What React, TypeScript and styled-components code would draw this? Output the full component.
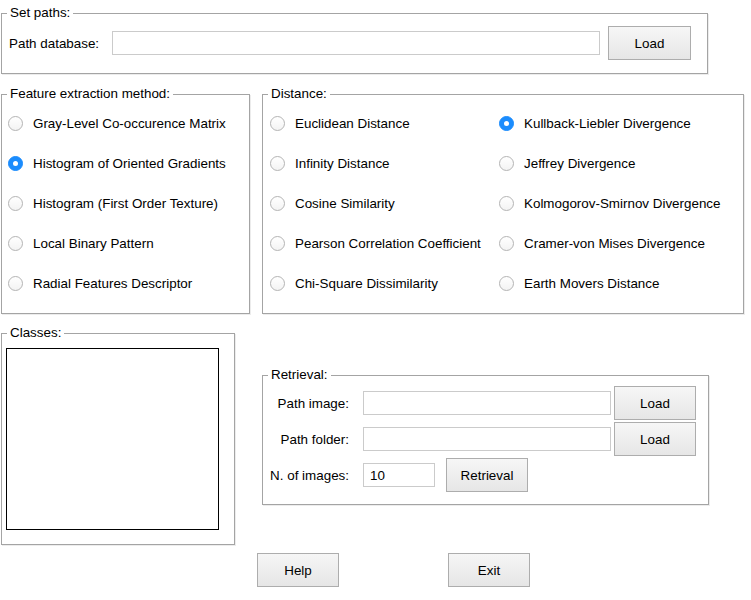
import React, { useState } from "react";
import styled, { createGlobalStyle } from "styled-components";

const GlobalStyle = createGlobalStyle`
  html, body {
    margin: 0;
    padding: 0;
    background: #ffffff;
  }
  body {
    font-family: "Liberation Sans", Arial, sans-serif;
    font-size: 13.4px;
    color: #000;
  }
  * {
    box-sizing: border-box;
  }
`;

const features = [
  "Gray-Level Co-occurence Matrix",
  "Histogram of Oriented Gradients",
  "Histogram (First Order Texture)",
  "Local Binary Pattern",
  "Radial Features Descriptor",
];

const distances = [
  "Euclidean Distance",
  "Kullback-Liebler Divergence",
  "Infinity Distance",
  "Jeffrey Divergence",
  "Cosine Similarity",
  "Kolmogorov-Smirnov Divergence",
  "Pearson Correlation Coefficient",
  "Cramer-von Mises Divergence",
  "Chi-Square Dissimilarity",
  "Earth Movers Distance",
];

const App = () => {
  const [feature, setFeature] = useState(1);
  const [distance, setDistance] = useState(1);

  return (
    <Page>
      <GlobalStyle />
      <SetPaths>
        <Legend>Set paths:</Legend>
        <PathRow>
          <Label>Path database:</Label>
          <TextBox $width={488} />
          <Button $width={83} $gap={8}>Load</Button>
        </PathRow>
      </SetPaths>

      <MiddleRow>
        <FeaturePanel>
          <Legend>Feature extraction method:</Legend>
          <RadioList>
            {features.map((f, i) => (
              <RadioRow key={f} onClick={() => setFeature(i)}>
                <Radio $checked={feature === i} />
                <span>{f}</span>
              </RadioRow>
            ))}
          </RadioList>
        </FeaturePanel>

        <DistancePanel>
          <Legend>Distance:</Legend>
          <DistanceGrid>
            {distances.map((d, i) => (
              <RadioRow key={d} onClick={() => setDistance(i)}>
                <Radio $checked={distance === i} />
                <span>{d}</span>
              </RadioRow>
            ))}
          </DistanceGrid>
        </DistancePanel>
      </MiddleRow>

      <LowerRow>
        <ClassesPanel>
          <Legend>Classes:</Legend>
          <ListBox />
        </ClassesPanel>

        <RetrievalPanel>
          <Legend>Retrieval:</Legend>
          <FormRows>
            <FormRow>
              <FieldLabel>Path image:</FieldLabel>
              <TextBox $width={248} />
              <Button $width={82}>Load</Button>
            </FormRow>
            <FormRow>
              <FieldLabel>Path folder:</FieldLabel>
              <TextBox $width={248} />
              <Button $width={82}>Load</Button>
            </FormRow>
            <FormRow>
              <FieldLabel>N. of images:</FieldLabel>
              <TextBox $width={72} defaultValue="10" />
              <Button $width={82} $gap={8}>Retrieval</Button>
            </FormRow>
          </FormRows>
        </RetrievalPanel>
      </LowerRow>

      <BottomBar>
        <Button $width={82}>Help</Button>
        <Button $width={82}>Exit</Button>
      </BottomBar>
    </Page>
  );
};

const Page = styled.div`
  width: 751px;
  height: 600px;
  padding: 5px 0 0 1px;
`;

const Panel = styled.fieldset`
  margin: 0;
  padding: 0;
  min-width: 0;
  border: 1px solid #a4a4a4;
  box-shadow: 1px 1px 0 #ececec;
`;

const Legend = styled.legend`
  margin-left: 5px;
  padding: 0 3px;
  height: 16px;
  line-height: 15px;
  font-size: 13.4px;
`;

const SetPaths = styled(Panel)`
  width: 707px;
  height: 69px;
`;

const PathRow = styled.div`
  display: flex;
  align-items: center;
  padding: 5px 0 0 7px;
`;

const Label = styled.span`
  width: 103px;
`;

const TextBox = styled.input.attrs({ type: "text" })<{ $width: number }>`
  width: ${({ $width }) => $width}px;
  height: 24px;
  margin: 0;
  padding: 1px 6px 0;
  border: 1px solid #cbcbcb;
  background: #fff;
  font-family: "Liberation Sans", Arial, sans-serif;
  font-size: 13.4px;
  color: #000;
  outline: none;
`;

const Button = styled.button<{ $width: number; $gap?: number }>`
  width: ${({ $width }) => $width}px;
  height: 34px;
  margin: 0 0 0 ${({ $gap }) => $gap ?? 0}px;
  padding: 0;
  border: 1px solid #adadad;
  background: linear-gradient(#f6f6f6, #e6e6e6);
  font-family: "Liberation Sans", Arial, sans-serif;
  font-size: 13.4px;
  color: #000;
  cursor: pointer;
`;

const MiddleRow = styled.div`
  display: flex;
  gap: 12px;
  margin-top: 12px;
`;

const FeaturePanel = styled(Panel)`
  width: 249px;
  height: 228px;
`;

const DistancePanel = styled(Panel)`
  width: 482px;
  height: 228px;
`;

const RadioList = styled.div`
  display: flex;
  flex-direction: column;
  padding: 1px 0 0 6px;
`;

const DistanceGrid = styled.div`
  display: grid;
  grid-template-columns: 229px auto;
  padding: 1px 0 0 7px;
`;

const RadioRow = styled.label`
  display: flex;
  align-items: center;
  gap: 10px;
  height: 40px;
  white-space: nowrap;
  cursor: default;
`;

const Radio = styled.span<{ $checked: boolean }>`
  position: relative;
  flex: none;
  width: 15px;
  height: 15px;
  border-radius: 50%;
  border: 1px solid ${({ $checked }) => ($checked ? "#1b8cfd" : "#b4b4b4")};
  background: ${({ $checked }) =>
    $checked ? "#1b8cfd" : "linear-gradient(#ffffff, #f3f3f3)"};
  &::after {
    content: "";
    display: ${({ $checked }) => ($checked ? "block" : "none")};
    position: absolute;
    left: 4px;
    top: 4px;
    width: 5px;
    height: 5px;
    border-radius: 50%;
    background: #fff;
  }
`;

const LowerRow = styled.div`
  display: flex;
  align-items: flex-start;
  gap: 27px;
  margin-top: 11px;
`;

const ClassesPanel = styled(Panel)`
  width: 234px;
  height: 220px;
`;

const ListBox = styled.div`
  width: 213px;
  height: 182px;
  margin: 7px 0 0 4px;
  border: 1px solid #000;
  background: #fff;
`;

const RetrievalPanel = styled(Panel)`
  width: 447px;
  height: 138px;
  margin-top: 42px;
`;

const FormRows = styled.div`
  display: flex;
  flex-direction: column;
  gap: 2px;
  padding-top: 3px;
`;

const FormRow = styled.div`
  display: flex;
  align-items: center;
  gap: 3px;
`;

const FieldLabel = styled.span`
  width: 86px;
  margin-right: 11px;
  text-align: right;
`;

const BottomBar = styled.div`
  display: flex;
  gap: 109px;
  margin: 8px 0 0 256px;
`;

export default App;
